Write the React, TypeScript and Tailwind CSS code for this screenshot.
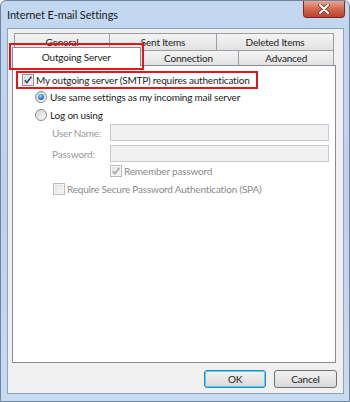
import React from "react";

const FONT = 'Lato, "Noto Sans", sans-serif';

function CheckBox({ checked, disabled }: { checked?: boolean; disabled?: boolean }) {
  return (
    <svg width="12" height="12" viewBox="0 0 12 12" className="shrink-0">
      <defs>
        <linearGradient id={disabled ? "cbd" : "cbe"} x1="0" y1="0" x2="1" y2="1">
          <stop offset="0" stopColor={disabled ? "#e6e6e6" : "#dcdcdc"} />
          <stop offset="1" stopColor={disabled ? "#f7f7f7" : "#ffffff"} />
        </linearGradient>
      </defs>
      <rect x="0.5" y="0.5" width="11" height="11" fill="#fff" stroke={disabled ? "#bcbcbc" : "#8e8f8f"} />
      <rect x="2" y="2" width="8" height="8" fill={`url(#${disabled ? "cbd" : "cbe"})`} stroke={disabled ? "#dedede" : "#c4c4c4"} strokeWidth="0.6" />
      {checked && (
        <path d="M2.8 6.2 L5 8.6 L9.4 2.8" fill="none" stroke={disabled ? "#a8a8a8" : "#3b4b73"} strokeWidth="1.6" strokeLinejoin="round" />
      )}
    </svg>
  );
}

function Radio({ checked }: { checked?: boolean }) {
  return (
    <svg width="12" height="12" viewBox="0 0 12 12" className="shrink-0">
      <defs>
        <linearGradient id="rg" x1="0" y1="0" x2="1" y2="1">
          <stop offset="0" stopColor="#d2d2d2" />
          <stop offset="1" stopColor="#fbfbfb" />
        </linearGradient>
        <radialGradient id="rdot" cx="0.4" cy="0.35" r="0.7">
          <stop offset="0" stopColor="#a9dbff" />
          <stop offset="0.6" stopColor="#2a87d2" />
          <stop offset="1" stopColor="#135a9c" />
        </radialGradient>
      </defs>
      <circle cx="6" cy="6" r="5.5" fill="url(#rg)" stroke="#8c8c8c" />
      {checked && <circle cx="6" cy="6" r="3" fill="url(#rdot)" />}
    </svg>
  );
}

const tabCls =
  "border-[#9a9ea6] bg-gradient-to-b from-[#f4f4f4] to-[#e2e2e2] flex items-center justify-center leading-none whitespace-nowrap";

export default function App() {
  return (
    <div
      className="relative w-[350px] h-[402px] overflow-hidden flex flex-col rounded-t-[6px] border border-[#6f849e] bg-gradient-to-b from-[#c3d8f0] via-[#bcd2ec] to-[#c8dbf1]"
      style={{ fontFamily: FONT }}
    >
      {/* title bar */}
      <div className="h-[27px] flex items-start shrink-0">
        <div className="pl-[6px] pt-[6px] text-[11px] tracking-[-0.1px] leading-[16px] text-[#1b1b1b] whitespace-nowrap">Internet E-mail Settings</div>
        <div className="ml-auto mr-[4px] w-[42px] h-[17px] rounded-b-[4px] border border-t-0 border-[#7a2b20] bg-gradient-to-b from-[#e9a795] via-[#d3674f] to-[#c2412b] flex items-center justify-center">
          <svg width="12" height="10" viewBox="0 0 12 10">
            <path d="M2 1 L10 9 M10 1 L2 9" stroke="#5d3a36" strokeWidth="3.6" strokeLinecap="round" />
            <path d="M2 1 L10 9 M10 1 L2 9" stroke="#ffffff" strokeWidth="2" strokeLinecap="round" />
          </svg>
        </div>
      </div>

      {/* client area */}
      <div className="ml-[6px] w-[337px] h-[366px] border border-[#8da2bb] bg-[#f0f0f0] pl-[4px] pt-[4px] flex flex-col text-[10px] tracking-[-0.2px] text-[#1e1e1e]">
        {/* tabs */}
        <div className="w-[324px] h-[32px] flex flex-col">
          <div className="mx-[2px] h-[17px] flex">
            <div className={`w-[95px] h-[17px] border border-r-0 border-b-0 ${tabCls}`}>General</div>
            <div className={`w-[107px] h-[17px] border border-r-0 border-b-0 ${tabCls}`}>Sent Items</div>
            <div className={`w-[118px] h-[17px] border border-b-0 ${tabCls}`}>Deleted Items</div>
          </div>
          <div className="mx-[2px] h-[15px] flex items-start">
            <div className="relative z-10 -ml-[2px] -mt-[3px] w-[129px] h-[19px] border border-b-0 border-[#898c95] bg-white flex items-center justify-center leading-none pb-[1px] whitespace-nowrap">Outgoing Server</div>
            <div className={`-ml-[2px] w-[101px] h-[15px] border border-l-0 border-b-0 ${tabCls}`}>Connection</div>
            <div className={`w-[95px] h-[15px] border border-l-0 border-b-0 ${tabCls}`}>Advanced</div>
          </div>
        </div>

        {/* panel */}
        <div className="relative w-[324px] h-[298px] border border-[#898c95] bg-white flex flex-col pt-[6px] whitespace-nowrap">
          <div className="h-[16px] flex items-center pl-[9px]">
            <CheckBox checked />
            <span className="ml-[2px] leading-none">My outgoing server (SMTP) requires authentication</span>
          </div>
          <div className="mt-[1px] h-[16px] flex items-center pl-[22px]">
            <Radio checked />
            <span className="ml-[3px] leading-none">Use same settings as my incoming mail server</span>
          </div>
          <div className="mt-[2px] h-[16px] flex items-center pl-[22px]">
            <Radio />
            <span className="ml-[3px] leading-none">Log on using</span>
          </div>
          <div className="mt-[1px] h-[17px] flex items-center pl-[39px]">
            <span className="w-[58px] leading-none text-[#9a9a9a]">User Name:</span>
            <div className="w-[219px] h-[17px] border border-[#c5cad2] bg-[#f0f0f0]" />
          </div>
          <div className="mt-[4px] h-[17px] flex items-center pl-[39px]">
            <span className="w-[58px] leading-none text-[#9a9a9a]">Password:</span>
            <div className="w-[219px] h-[17px] border border-[#c5cad2] bg-[#f0f0f0]" />
          </div>
          <div className="mt-[1px] h-[16px] flex items-center pl-[97px]">
            <CheckBox checked disabled />
            <span className="ml-[2px] leading-none text-[#8a8a8a]">Remember password</span>
          </div>
          <div className="mt-[2px] h-[16px] flex items-center pl-[40px]">
            <CheckBox disabled />
            <span className="ml-[2px] leading-none text-[#8a8a8a]">Require Secure Password Authentication (SPA)</span>
          </div>
        </div>

        {/* buttons */}
        <div className="mt-[7px] w-[325px] flex justify-end gap-[8px]">
          <div className="w-[62px] h-[18px] rounded-[3px] border border-[#3c7fb1] shadow-[inset_0_0_0_1px_#48d7fb] bg-gradient-to-b from-[#f2f2f2] to-[#d9d9d9] flex items-center justify-center leading-none">OK</div>
          <div className="w-[63px] h-[18px] rounded-[3px] border border-[#707070] bg-gradient-to-b from-[#f2f2f2] to-[#d9d9d9] flex items-center justify-center leading-none">Cancel</div>
        </div>
      </div>

      {/* red annotation boxes */}
      <div className="absolute left-[8px] top-[42px] w-[135px] h-[27px] border-[2px] border-[#e8141c] pointer-events-none" />
      <div className="absolute left-[15px] top-[70px] w-[242px] h-[18px] border-[2px] border-[#e8141c] pointer-events-none" />
    </div>
  );
}
